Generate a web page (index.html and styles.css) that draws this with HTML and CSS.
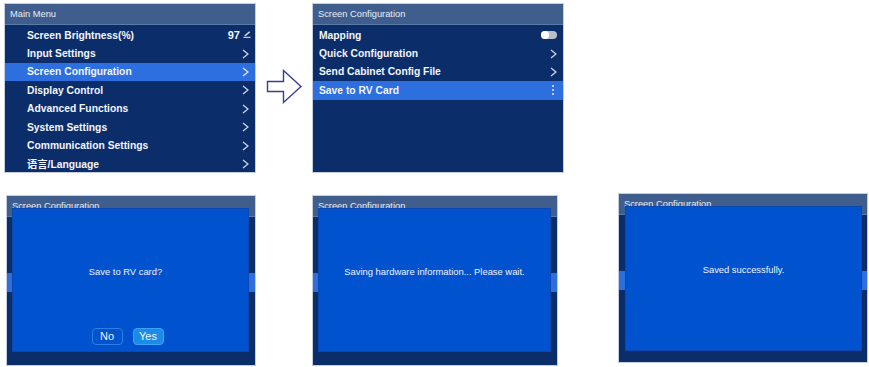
FILE: index.html
```html
<!DOCTYPE html>
<html>
<head>
<meta charset="utf-8">
<link rel="stylesheet" href="styles.css">
</head>
<body>
<div class="page">
  <div class="top-row">
    <div class="panel panel-main">
      <div class="panel-head">Main Menu</div>
      <div class="rows rows-main">
        <div class="row row-value"><span>Screen Brightness(%)</span><span class="value">97<svg class="edit" viewBox="0 0 8 8" width="8" height="8"><path d="M1.2 5.6 L6.2 1.2 L7.2 2.2 L2.6 6.2 Z" fill="#d8dee9"/><rect x="0.5" y="6.8" width="7" height="1.1" fill="#d8dee9"/></svg></span></div>
        <div class="row"><span>Input Settings</span><svg class="chev" viewBox="0 0 7 10" width="7" height="10"><path d="M1 1 L6 5 L1 9" fill="none" stroke="#d4dbe8" stroke-width="1.2"/></svg></div>
        <div class="row active"><span>Screen Configuration</span><svg class="chev" viewBox="0 0 7 10" width="7" height="10"><path d="M1 1 L6 5 L1 9" fill="none" stroke="#e4e9f2" stroke-width="1.2"/></svg></div>
        <div class="row"><span>Display Control</span><svg class="chev" viewBox="0 0 7 10" width="7" height="10"><path d="M1 1 L6 5 L1 9" fill="none" stroke="#d4dbe8" stroke-width="1.2"/></svg></div>
        <div class="row"><span>Advanced Functions</span><svg class="chev" viewBox="0 0 7 10" width="7" height="10"><path d="M1 1 L6 5 L1 9" fill="none" stroke="#d4dbe8" stroke-width="1.2"/></svg></div>
        <div class="row"><span>System Settings</span><svg class="chev" viewBox="0 0 7 10" width="7" height="10"><path d="M1 1 L6 5 L1 9" fill="none" stroke="#d4dbe8" stroke-width="1.2"/></svg></div>
        <div class="row"><span>Communication Settings</span><svg class="chev" viewBox="0 0 7 10" width="7" height="10"><path d="M1 1 L6 5 L1 9" fill="none" stroke="#d4dbe8" stroke-width="1.2"/></svg></div>
        <div class="row"><span>语言/Language</span><svg class="chev" viewBox="0 0 7 10" width="7" height="10"><path d="M1 1 L6 5 L1 9" fill="none" stroke="#d4dbe8" stroke-width="1.2"/></svg></div>
      </div>
    </div>
    <div class="arrow-wrap">
      <svg class="arrow" viewBox="0 0 37 36" width="37" height="36"><path d="M1.5 12.5 L17.5 12.5 L17.5 1.5 L35 17.5 L17.5 33.5 L17.5 22.5 L1.5 22.5 Z" fill="#ffffff" stroke="#3a3c9a" stroke-width="1.4" stroke-linejoin="miter"/></svg>
    </div>
    <div class="panel panel-sub">
      <div class="panel-head">Screen Configuration</div>
      <div class="rows rows-sub">
        <div class="row"><span>Mapping</span><span class="toggle"><span class="knob"></span></span></div>
        <div class="row"><span>Quick Configuration</span><svg class="chev" viewBox="0 0 7 10" width="7" height="10"><path d="M1 1 L6 5 L1 9" fill="none" stroke="#d4dbe8" stroke-width="1.2"/></svg></div>
        <div class="row"><span>Send Cabinet Config File</span><svg class="chev" viewBox="0 0 7 10" width="7" height="10"><path d="M1 1 L6 5 L1 9" fill="none" stroke="#d4dbe8" stroke-width="1.2"/></svg></div>
        <div class="row active"><span>Save to RV Card</span><span class="kebab"><i></i><i></i><i></i></span></div>
      </div>
    </div>
  </div>

  <div class="bottom-row">
    <div class="panel panel-b1">
      <div class="panel-head">Screen Configuration</div>
      <div class="rows rows-sub">
        <div class="row"></div>
        <div class="row"></div>
        <div class="row"></div>
        <div class="row active"></div>
      </div>
      <div class="dialog dialog-confirm">
        <div class="msg">Save to RV card?</div>
        <div class="buttons">
          <span class="btn btn-no">No</span>
          <span class="btn btn-yes">Yes</span>
        </div>
      </div>
    </div>
    <div class="panel panel-b2">
      <div class="panel-head">Screen Configuration</div>
      <div class="rows rows-sub">
        <div class="row"></div>
        <div class="row"></div>
        <div class="row"></div>
        <div class="row active"></div>
      </div>
      <div class="dialog">
        <div class="msg">Saving hardware information... Please wait.</div>
      </div>
    </div>
    <div class="panel panel-b3">
      <div class="panel-head">Screen Configuration</div>
      <div class="rows rows-sub">
        <div class="row"></div>
        <div class="row"></div>
        <div class="row"></div>
        <div class="row active"></div>
      </div>
      <div class="dialog">
        <div class="msg">Saved successfully.</div>
      </div>
    </div>
  </div>
</div>
</body>
</html>
```

FILE: styles.css
```css
* { box-sizing: border-box; }
html, body {
  margin: 0;
  padding: 0;
  background: #ffffff;
}
body {
  font-family: "Liberation Sans", Arial, "Noto Sans CJK SC", sans-serif;
  color: #f2f5fa;
}
.page {
  width: 869px;
  height: 367px;
  overflow: hidden;
}
.top-row {
  display: flex;
  align-items: flex-start;
  padding: 3px 0 0 4px;
}
.panel {
  position: relative;
  background: #0b2e6b;
  border: 1px solid #c4cedd;
  overflow: hidden;
}
.panel-head {
  height: 21px;
  background: #3f5e8e;
  color: #e8edf5;
  font-size: 9.3px;
  line-height: 21px;
  padding-left: 5px;
  border-bottom: 1px solid #5a7aa8;
}
.panel-main { width: 252px; height: 170px; }
.panel-sub { width: 252px; height: 170px; }
.rows {
  display: flex;
  flex-direction: column;
  padding-top: 1px;
}
.row {
  height: 18.4px;
  display: flex;
  align-items: center;
  justify-content: space-between;
  font-size: 10.3px;
  font-weight: bold;
  color: #f2f5fb;
  padding-right: 6px;
}
.rows-main .row { padding-left: 22px; }
.rows-main .row-value { padding-right: 4px; }
.rows-sub .row { padding-left: 6px; }
.row.active { background: #2d6fdf; }
.value {
  display: flex;
  align-items: center;
  gap: 3px;
  font-size: 11px;
}
.edit { margin-top: -2px; }
.chev { display: block; }
.arrow-wrap {
  width: 56px;
  display: flex;
  padding: 66px 0 0 10px;
}
.arrow { display: block; }
.toggle {
  position: relative;
  width: 16px;
  height: 8px;
  border-radius: 4px;
  background: #b9bfca;
}
.knob {
  position: absolute;
  left: 0;
  top: 0;
  width: 8px;
  height: 8px;
  border-radius: 50%;
  background: #ffffff;
}
.kebab {
  display: flex;
  flex-direction: column;
  gap: 2px;
  margin-right: 3px;
}
.kebab i {
  display: block;
  width: 2px;
  height: 2px;
  background: #e8eef8;
  border-radius: 1px;
}
.bottom-row {
  display: flex;
  align-items: flex-start;
  margin-top: 22px;
  padding-left: 6px;
}
.panel-b1 { width: 250px; height: 171px; }
.panel-b2 { width: 246px; height: 171px; margin-left: 56px; }
.panel-b3 { width: 250px; height: 170px; margin-left: 60px; margin-top: -2px; }
.dialog {
  position: absolute;
  top: 12px;
  left: 5px;
  right: 6px;
  bottom: 13px;
  background: #0052cf;
  border: 1px solid #0a48b0;
  display: flex;
  flex-direction: column;
  align-items: center;
}
.panel-b3 .dialog { left: 6px; right: 5px; bottom: 11px; }
.msg {
  margin-top: 56px;
  font-size: 9.4px;
  line-height: 14px;
  color: #eef2fa;
}
.dialog-confirm .msg { margin-right: 10px; }
.buttons {
  margin-top: auto;
  margin-bottom: 6px;
  margin-right: 6px;
  display: flex;
  gap: 10px;
}
.btn {
  width: 31px;
  height: 17px;
  border-radius: 4px;
  font-size: 11px;
  line-height: 15px;
  text-align: center;
  color: #f2f6fc;
  border: 1px solid #2a80e6;
}
.btn-no { background: #0052cf; }
.btn-yes { background: #1b8be8; border-color: #3fa2f5; }
```
